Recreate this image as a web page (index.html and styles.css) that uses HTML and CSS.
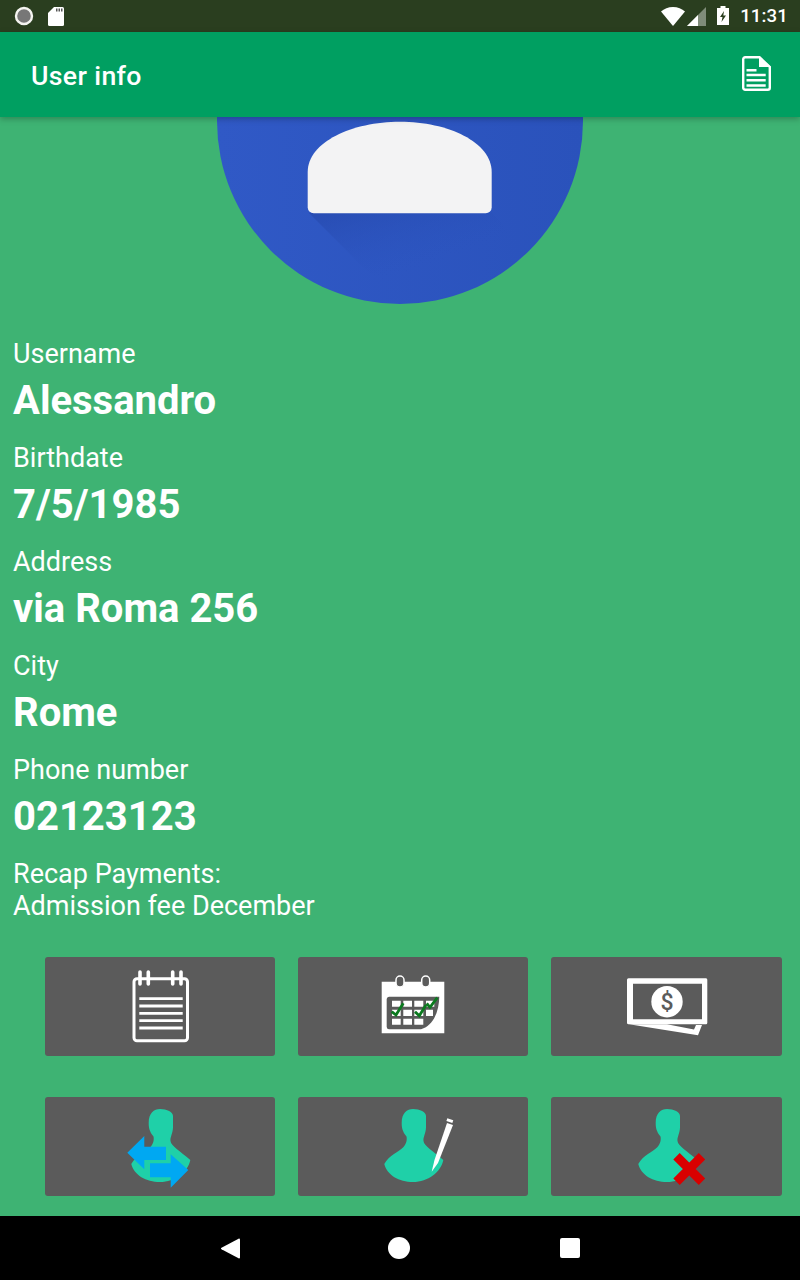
FILE: index.html
```html
<!DOCTYPE html>
<html lang="en">
<head>
  <meta charset="UTF-8">
  <meta name="viewport" content="width=device-width, initial-scale=1.0">
  <title>User info</title>
  <link rel="stylesheet" href="styles.css">
</head>
<body>
<svg class="defs" width="0" height="0">
  <defs>
    <path id="person" d="M50 12C57 12 63 15 63 19L63 30C63 36 60 40 60.500 44C61 49 70 54 80.300 63C78 75 65 85 50 85C36 85 24 78 21.300 67C26 58 36 55 40.500 50C44 46 44 42 43.500 39.500C39 34 38.700 30 38.700 26C38.700 16 44 12 50 12Z"/>
    <clipPath id="avatarClip"><circle cx="183" cy="4" r="183"/></clipPath>
    <linearGradient id="avatarBase" x1="0" y1="0" x2="1" y2="0">
      <stop offset="0" stop-color="#3059c6"/>
      <stop offset="1" stop-color="#2a52bb"/>
    </linearGradient>
    <linearGradient id="avatarShade" x1="0" y1="0" x2="0.8" y2="1">
      <stop offset="0" stop-color="#2446a8" stop-opacity="0.6"/>
      <stop offset="0.55" stop-color="#2b54c0" stop-opacity="0"/>
    </linearGradient>
  </defs>
</svg>

<div class="screen">
  <div class="status-bar">
    <div class="status-left">
      <svg width="20" height="20" viewBox="0 0 20 20"><circle cx="10" cy="10" r="8" fill="#777" stroke="#f4f4f0" stroke-width="2.400"/></svg>
      <svg width="16" height="19" viewBox="0 0 16 19"><path d="M6 0H14.500A1.500 1.500 0 0 1 16 1.500V17.500A1.500 1.500 0 0 1 14.500 19H1.500A1.500 1.500 0 0 1 0 17.500V6Z" fill="#fff"/><path d="M8 1.500h1.500v3H8zM10.500 1.500H12v3h-1.500zM13 1.500h1.500v3H13z" fill="#555"/></svg>
    </div>
    <div class="status-right">
      <svg class="ic-wifi" width="24" height="19" viewBox="0 0 24 19"><path d="M0 4.500C3 1.800 7.300 0 12 0S21 1.800 24 4.500L12 19Z" fill="#fff"/></svg>
      <svg class="ic-signal" width="19" height="19" viewBox="0 0 19 19"><path d="M19 0V19H0Z" fill="#7f8c79"/><path d="M11 8V19H0Z" fill="#fff"/></svg>
      <svg class="ic-battery" width="12" height="19" viewBox="0 0 12 19"><path d="M3.500 0h5v2H12V19H0V2h3.500Z" fill="#fff"/><path d="M7 5 3 11h2.500L4.500 16 9 9.500H6.300Z" fill="#2a3e1f"/></svg>
      <span class="clock">11:31</span>
    </div>
  </div>

  <header class="app-bar">
    <h1 class="app-title">User info</h1>
    <svg class="doc-icon" width="29" height="35" viewBox="0 0 29 35">
      <path d="M3.200 1.200H17.500L27.800 11V31.800A2 2 0 0 1 25.800 33.800H3.200A2 2 0 0 1 1.200 31.800V3.200A2 2 0 0 1 3.200 1.200Z" fill="none" stroke="#fff" stroke-width="2.400"/>
      <path d="M17 0 29 11H17Z" fill="#fff"/>
      <path d="M4.500 13h10v2.500h-10zM4.500 17.700h19.200v2.500H4.500zM4.500 23h19.200v2.500H4.500zM4.500 28.200h19.200v2.500H4.500z" fill="#fff"/>
    </svg>
  </header>

  <main class="content">
    <svg class="avatar" width="366" height="187" viewBox="0 0 366 187">
      <circle cx="183" cy="4" r="183" fill="url(#avatarBase)"/>
      <path d="M92 96 L190 194 L366 194 L275 96Z" fill="url(#avatarShade)" clip-path="url(#avatarClip)"/>
      <path d="M90.700 55C90.700 25 135 4.700 183 4.700C231 4.700 274.700 25 274.700 55V90.300A6 6 0 0 1 268.700 96.300H96.700A6 6 0 0 1 90.700 90.300Z" fill="#f3f3f4"/>
    </svg>

    <dl class="fields">
      <dt>Username</dt>
      <dd>Alessandro</dd>
      <dt>Birthdate</dt>
      <dd>7/5/1985</dd>
      <dt>Address</dt>
      <dd>via Roma 256</dd>
      <dt>City</dt>
      <dd>Rome</dd>
      <dt>Phone number</dt>
      <dd>02123123</dd>
    </dl>

    <p class="recap">Recap Payments:<br>Admission fee December</p>

    <div class="actions">
      <button class="action">
        <svg width="100" height="99" viewBox="0 0 100 99">
          <rect x="24" y="21.700" width="53.500" height="62" rx="3" fill="none" stroke="#fff" stroke-width="3"/>
          <path d="M30 15v12M38.300 15v12M62.700 15v12M71 15v12" stroke="#fff" stroke-width="3.600" stroke-linecap="round"/>
          <path d="M29.300 41.700h43.400M29.300 49h43.400M29.300 56.300h43.400M29.300 63.700h43.400M29.300 71h43.400" stroke="#fff" stroke-width="2.800"/>
        </svg>
      </button>
      <button class="action">
        <svg width="100" height="99" viewBox="0 0 100 99">
          <path d="M18.700 24.700H81.300V76.300H18.700Z" fill="#fff"/>
          <path d="M23.700 42A2.500 2.500 0 0 1 26 39.700H76.300C76 52 72 68 58 72.300H26A2.500 2.500 0 0 1 23.700 70Z" fill="#5b5b5b"/>
          <rect x="33" y="19" width="8" height="11" rx="4" fill="#5b5b5b" stroke="#fff" stroke-width="1.500"/>
          <rect x="58.700" y="19" width="8" height="11" rx="4" fill="#5b5b5b" stroke="#fff" stroke-width="1.500"/>
          <path d="M29 43.700h8.700v6H29zM40.300 43.700H49v6h-8.700zM51.300 43.700h9v6h-9zM63 43.700h8.300v6H63zM29 52.700h8.700V59H29zM40.300 52.700H49V59h-8.700zM51.300 52.700h9V59h-9zM63 52.700h7V59H63zM29 61.700h8.700v6H29zM40.300 61.700H49v6h-8.700zM51.300 61.700h9v6h-9z" fill="#fff"/>
          <path d="M28.700 54.700 33 58 40.300 46.300M52 54.700 56.300 58.700 63 48M63.700 46.300 67 50.300 74.300 40.700" fill="none" stroke="#0b7a1f" stroke-width="2.800"/>
        </svg>
      </button>
      <button class="action">
        <svg width="100" height="99" viewBox="0 0 100 99">
          <path d="M11.500 21.300H89A1.500 1.500 0 0 1 90.300 22.800V66A1.500 1.500 0 0 1 89 67.300H11.500A1.500 1.500 0 0 1 10 66V22.800A1.500 1.500 0 0 1 11.500 21.300Z M16 26.700V62.300H85V26.700Z" fill="#fff" fill-rule="evenodd"/>
          <path d="M12 67.300 81 78.300 85 68H79L77 72.500 50 67.300Z" fill="#fff"/>
          <circle cx="50" cy="44.700" r="15.700" fill="#fff"/>
          <text class="dollar" x="50" y="52.500" text-anchor="middle">$</text>
        </svg>
      </button>
      <button class="action">
        <svg width="100" height="99" viewBox="0 0 100 99">
          <use href="#person" fill="#1fd0a8"/>
          <path d="M17.300 55.700 34.300 39V49.700H56V63H34.300V72.300Z" fill="#00a8f2"/>
          <path d="M78.300 73 60.700 57.300V66.300H40V80.300H60.700V90.700Z" fill="#00a8f2"/>
        </svg>
      </button>
      <button class="action">
        <svg width="100" height="99" viewBox="0 0 100 99">
          <use href="#person" fill="#1fd0a8"/>
          <path d="M68.700 74.700 71.500 63 84 26 90 28 75 66Z" fill="#fff"/>
          <path d="M84.300 21.300 90.300 23.300 89.300 26 83.400 24Z" fill="#fff"/>
        </svg>
      </button>
      <button class="action">
        <svg width="100" height="99" viewBox="0 0 100 99">
          <use href="#person" fill="#1fd0a8"/>
          <path d="M59.500 59.200 85 84.800M85 59.200 59.500 84.800" stroke="#d90000" stroke-width="9"/>
        </svg>
      </button>
    </div>
  </main>

  <nav class="nav-bar">
    <svg width="19" height="21" viewBox="0 0 19 21"><path d="M18 0.500A1 1 0 0 1 19 1.500V19.500A1 1 0 0 1 18 20.500L0.500 11.300A1 1 0 0 1 0.500 9.700Z" fill="#fff"/></svg>
    <span class="nav-home"></span>
    <span class="nav-recent"></span>
  </nav>
</div>
</body>
</html>
```

FILE: styles.css
```css
* {
  box-sizing: border-box;
}

body {
  margin: 0;
  font-family: Roboto, sans-serif;
  color: #fff;
}

.defs {
  display: block;
  height: 0;
}

.screen {
  display: flex;
  flex-direction: column;
  width: 800px;
  height: 1280px;
  background-color: #3eb373;
}

.status-bar {
  display: flex;
  justify-content: space-between;
  align-items: center;
  height: 32px;
  padding: 0 12px 0 14px;
  background-color: #2a3e1f;
}

.status-left {
  display: flex;
  align-items: center;
  gap: 14px;
}

.status-right {
  display: flex;
  align-items: center;
}

.ic-signal {
  margin-left: 2px;
}

.ic-battery {
  margin: -2px 0 0 11px;
}

.clock {
  margin-left: 11px;
  font-size: 18.67px;
  font-weight: 500;
  letter-spacing: 0.1px;
}

.app-bar {
  position: relative;
  display: flex;
  justify-content: space-between;
  align-items: center;
  height: 85px;
  padding: 0 29px 0 31px;
  background-color: #009f61;
  box-shadow: 0 2px 6px rgba(0, 0, 0, 0.25);
}

.app-title {
  margin: 2px 0 0;
  font-size: 26.67px;
  font-weight: 500;
  letter-spacing: 0.35px;
}

.doc-icon {
  margin-top: -2px;
}

.content {
  display: flex;
  flex: 1;
  flex-direction: column;
  padding-bottom: 20px;
}

.avatar {
  display: block;
  align-self: center;
  flex-shrink: 0;
}

.fields {
  margin: 34px 0 0;
  padding: 0 13px;
}

.fields dt {
  font-size: 27px;
  line-height: 32px;
}

.fields dd {
  margin: 0 0 10px;
  font-size: 40px;
  font-weight: 700;
  line-height: 62px;
}

.recap {
  margin: 0;
  padding: 0 13px;
  font-size: 27px;
  line-height: 32px;
}

.actions {
  display: grid;
  grid-template-columns: 230px 230px 231px;
  grid-auto-rows: 99px;
  gap: 41px 23px;
  margin-top: auto;
  padding-left: 45px;
}

.action {
  display: flex;
  justify-content: center;
  padding: 0;
  border: none;
  border-radius: 3px;
  background-color: #5b5b5b;
}

.dollar {
  font-family: Roboto, sans-serif;
  font-size: 23px;
  font-weight: 500;
  fill: #5b5b5b;
}

.nav-bar {
  display: flex;
  justify-content: center;
  align-items: center;
  gap: 148px;
  height: 64px;
  padding-left: 1px;
  background-color: #000;
}

.nav-home {
  width: 22px;
  height: 22px;
  margin-right: 2px;
  border-radius: 50%;
  background-color: #fff;
}

.nav-recent {
  width: 20px;
  height: 20px;
  border-radius: 2px;
  background-color: #fff;
}
```
